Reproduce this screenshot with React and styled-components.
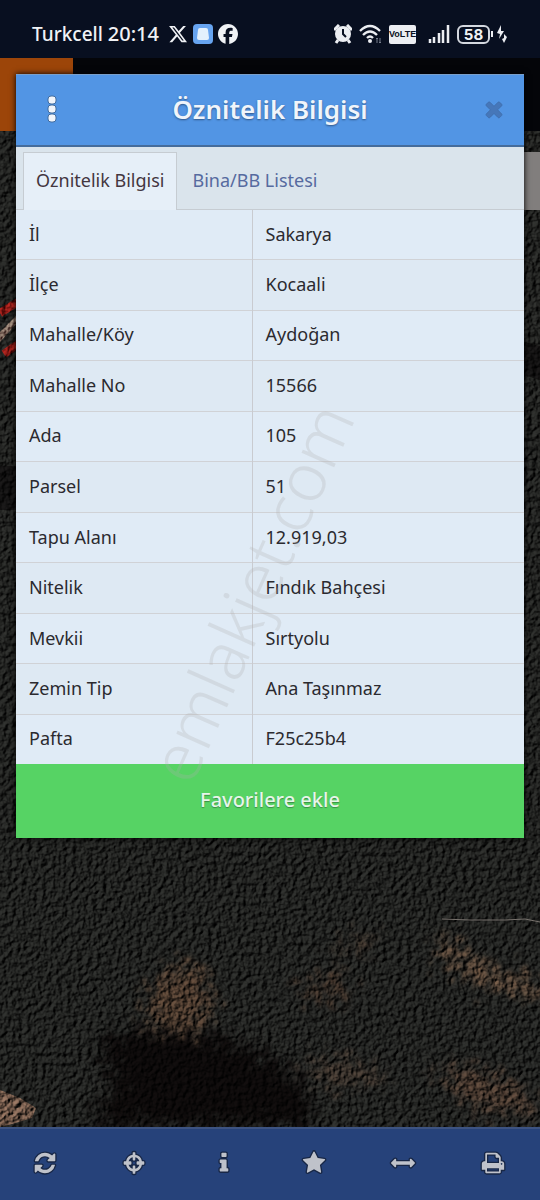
import React, {useState} from 'react'
import styled, {createGlobalStyle} from 'styled-components'
import {FaXTwitter, FaFacebook} from 'react-icons/fa6'

const datos = [
  {nombre: 'İl', valor: 'Sakarya'},
  {nombre: 'İlçe', valor: 'Kocaali'},
  {nombre: 'Mahalle/Köy', valor: 'Aydoğan'},
  {nombre: 'Mahalle No', valor: '15566'},
  {nombre: 'Ada', valor: '105'},
  {nombre: 'Parsel', valor: '51'},
  {nombre: 'Tapu Alanı', valor: '12.919,03'},
  {nombre: 'Nitelik', valor: 'Fındık Bahçesi'},
  {nombre: 'Mevkii', valor: 'Sırtyolu'},
  {nombre: 'Zemin Tip', valor: 'Ana Taşınmaz'},
  {nombre: 'Pafta', valor: 'F25c25b4'}
]

const herramientas = [
  {id: 'Yenile', d: 'M1639 1056q0 5-1 7-64 268-268 434.500t-478 166.500q-146 0-282.500-55t-243.500-157l-129 129q-19 19-45 19t-45-19-19-45v-448q0-26 19-45t45-19h448q26 0 45 19t19 45-19 45l-137 137q71 66 161 102t187 36q134 0 250-65t186-179q11-17 53-117 8-23 30-23h192q13 0 22.500 9.500t9.500 22.500zm25-800v448q0 26-19 45t-45 19h-448q-26 0-45-19t-19-45 19-45l138-138q-148-137-349-137-134 0-250 65t-186 179q-11 17-53 117-8 23-30 23h-199q-13 0-22.500-9.500t-9.500-22.500v-7q65-268 270-434.500t480-166.500q146 0 284 55.500t245 156.500l130-129q19-19 45-19t45 19 19 45z'},
  {id: 'Konum', d: 'M800 128q0-40 40-40h112q40 0 40 40v144q200 34 330 164t166 332h112q64 0 64 64v128q0 64-64 64h-112q-36 202-166 332t-330 166v142q0 40-40 40h-112q-40 0-40-40v-142q-200-36-330-166t-166-332H192q-64 0-64-64V832q0-64 64-64h112q36-202 166-332t330-164zm0 344q-120 30-200 110T492 768h148q64 0 64 64v128q0 64-64 64H492q28 106 108 186t200 112v-170q0-64 64-64h64q64 0 64 64v170q120-32 200-112t108-186h-148q-64 0-64-64V832q0-64 64-64h148q-28-106-108-186T992 472v168q0 64-64 64h-64q-64 0-64-64z'},
  {id: 'Bilgi', d: 'M1216 1344v128q0 26-19 45t-45 19h-512q-26 0-45-19t-19-45v-128q0-26 19-45t45-19h64v-384h-64q-26 0-45-19t-19-45v-128q0-26 19-45t45-19h384q26 0 45 19t19 45v576h64q26 0 45 19t19 45zm-128-1152v192q0 26-19 45t-45 19h-256q-26 0-45-19t-19-45v-192q0-26 19-45t45-19h256q26 0 45 19t19 45z'},
  {id: 'Favoriler', d: 'M1728 647q0 22-26 48l-363 354 86 500q1 7 1 20 0 21-10.500 35.500t-30.500 14.500q-19 0-40-12l-449-236-449 236q-22 12-40 12-21 0-31.500-14.500t-10.500-35.500q0-6 2-20l86-500-364-354q-25-27-25-48 0-37 56-46l502-73 225-455q19-41 49-41t49 41l225 455 502 73q56 9 56 46z'},
  {id: 'Ölçüm', d: 'M1792 896q0 26-19 45l-256 256q-19 19-45 19t-45-19-19-45v-128H384v128q0 26-19 45t-45 19-45-19L19 941Q0 922 0 896t19-45l256-256q19-19 45-19t45 19 19 45v128h1024V640q0-26 19-45t45-19 45 19l256 256q19 19 19 45z'},
  {id: 'Yazdır', d: 'M448 1536h896v-256h-896v256zm0-640h896v-384h-160q-40 0-68-28t-28-68v-160h-640v640zm1152 64q0-26-19-45t-45-19-45 19-19 45 19 45 45 19 45-19 19-45zm128 0v416q0 13-9.500 22.500t-22.500 9.500h-224v160q0 40-28 68t-68 28h-960q-40 0-68-28t-28-68v-160h-224q-13 0-22.500-9.500t-9.500-22.500v-416q0-79 56.500-135.500t135.500-56.500h64v-544q0-40 28-68t68-28h672q40 0 88 20t76 48l152 152q28 28 48 76t20 88v256h64q79 0 135.500 56.500t56.500 135.500z'}
]

const cerrar = 'M1490 1322q0 40-28 68l-136 136q-28 28-68 28t-68-28l-294-294-294 294q-28 28-68 28t-68-28l-136-136q-28-28-28-68t28-68l294-294-294-294q-28-28-28-68t28-68l136-136q28-28 68-28t68 28l294 294 294-294q28-28 68-28t68 28l136 136q28 28 28 68t-28 68l-294 294 294 294q28 28 28 68z'

const Satelite = () => (
  <Terreno viewBox="0 58 540 1069" preserveAspectRatio="xMidYMid slice" aria-hidden="true">
    <defs>
      <filter id="relieve" x="0" y="0" width="100%" height="100%" colorInterpolationFilters="sRGB">
        <feTurbulence type="fractalNoise" baseFrequency="0.2" numOctaves="4" seed="7" result="ruido" />
        <feDiffuseLighting in="ruido" surfaceScale="3" diffuseConstant="0.7" lightingColor="#ffffff">
          <feDistantLight azimuth="215" elevation="42" />
        </feDiffuseLighting>
      </filter>
      <filter id="mancha" x="-20%" y="-20%" width="140%" height="140%" colorInterpolationFilters="sRGB">
        <feTurbulence type="fractalNoise" baseFrequency="0.14" numOctaves="4" seed="3" result="r" />
        <feDisplacementMap in="SourceGraphic" in2="r" scale="70" xChannelSelector="R" yChannelSelector="G" />
        <feGaussianBlur stdDeviation="2" />
      </filter>
    </defs>
    <rect y="58" width="540" height="1069" fill="#242523" />
    <g filter="url(#mancha)">
      <path d="M92 1038 L150 1030 L230 1040 L262 1052 L306 1084 L312 1127 H84 L116 1088 Z" fill="#0b0808" opacity=".9" />
      <path d="M150 985 L185 962 L208 976 L208 1022 L185 1035 L148 1022 Z" fill="#76513a" opacity=".5" />
      <path d="M436 928 L462 952 L492 970 L540 984 V998 L484 986 L446 962 Z" fill="#8b654b" opacity=".6" />
      <path d="M350 940 L380 930 L350 952 L330 966 Z" fill="#694936" opacity=".5" />
      <path d="M304 984 L338 980 L350 996 L310 998 Z" fill="#65432f" opacity=".5" />
      <path d="M432 1066 L486 1072 L526 1092 L532 1118 L470 1104 Z" fill="#71503c" opacity=".5" />
      <path d="M300 1068 L345 1058 L390 1080 L330 1086 Z" fill="#5c4538" opacity=".5" />
    </g>
    <path d="M0 466 H20 V510 H0 Z M515 340 L540 346 V380 L520 374 Z" fill="#0a0909" opacity=".6" />
    <path d="M0 1090 L20 1098 L36 1108 L32 1118 L12 1124 L0 1127 Z" fill="#846552" opacity=".8" />
    <path d="M0 332 L18 314 V322 L0 342 Z" fill="#8b7669" />
    <path d="M0 313 L18 302 M4 354 L18 344" stroke="#991e19" strokeWidth="8" />
    <Relieve y="58" width="540" height="1069" filter="url(#relieve)" />
    <path d="M442 919 L470 920 L505 920 L525 919 L540 922" fill="none" stroke="#77716c" strokeWidth="1" />
  </Terreno>
)

const BarraEstado = () => (
  <Estado>
    <Grupo>
      <Operador>Turkcell</Operador>
      <Hora>20:14</Hora>
      <FaXTwitter size={20} />
      <svg width="20" height="20" viewBox="0 0 20 20" aria-hidden="true">
        <rect width="20" height="20" rx="4" fill="#67a4f0" />
        <path d="M5 6q0-2 2-2h6q2 0 2 2l1 8q0 2-2 2H6q-2 0-2-2z" fill="#e4f1fd" />
      </svg>
      <FaFacebook size={20} />
    </Grupo>
    <Iconos>
      <svg width="18" height="20" viewBox="1 0 18 20" aria-hidden="true">
        <path d="M1 6 L6 1 M19 6 L14 1 M5 16 L3 19 M15 16 L17 19" stroke="#eceef2" strokeWidth="3" />
        <circle cx="10" cy="10" r="8" fill="#eceef2" />
        <path d="M10 5v5l3 3" stroke="#0a1122" strokeWidth="2" fill="none" />
      </svg>
      <svg width="23" height="20" viewBox="0 0 23 20" aria-hidden="true">
        <g fill="none" stroke="#eceef2" strokeWidth="2.300">
          <path d="M1 7q10-10 20 0M4 11q7-7 14 0M8 14q3-3 6 0" />
        </g>
        <circle cx="11" cy="17" r="2" fill="#eceef2" />
        <path d="M18 14v5m-1-4 1-1 1 1M21 14v5m-1-1 1 1 1-1" stroke="#777e8c" fill="none" />
      </svg>
      <Volte>VoLTE</Volte>
      <svg width="22" height="20" viewBox="0 0 22 20" aria-hidden="true">
        <path d="M2 15v4M6 13v6M11 9v10M15 6v13M20 1v18" stroke="#eceef2" strokeWidth="2.500" />
      </svg>
      <Bateria>
        <Carga>58</Carga>
        <svg width="18" height="20" viewBox="0 0 18 20" aria-hidden="true">
          <path d="M2 7v6" stroke="#eceef2" strokeWidth="2" />
          <path d="M11 1 L7 9 L10 10 L9 15 L14 7 L11 7z M14 10v4l-2 1 2 4 3-6z" fill="#eceef2" />
        </svg>
      </Bateria>
    </Iconos>
  </Estado>
)

const App = () => {

  const [pestana, setPestana] = useState('bilgi')

  return (
    <Pagina>
      <EstiloGlobal />
      <BarraEstado />
      <Mapa>
        <Satelite />
        <BarraMapa><BotonMenu type="button" aria-label="Menü" /></BarraMapa>
        <PanelLateral />
        <Ventana>
          <Cabecera>
            <BotonCabecera type="button" aria-label="Seçenekler">
              <svg width="24" height="28" viewBox="0 0 24 28" aria-hidden="true">
                <g fill="#f1f5fb" stroke="#416c9f" strokeWidth="1">
                  <rect x="8" y="1" width="8" height="8" rx="3" />
                  <rect x="8" y="10" width="8" height="8" rx="3" />
                  <rect x="8" y="19" width="8" height="8" rx="3" />
                </g>
              </svg>
            </BotonCabecera>
            <Titulo>Öznitelik Bilgisi</Titulo>
            <BotonCabecera type="button" aria-label="Kapat" $final>
              <svg width="24" height="24" viewBox="0 0 1792 1792" aria-hidden="true">
                <path d={cerrar} fill="#4677b9" stroke="#3e69a5" strokeWidth="50" />
              </svg>
            </BotonCabecera>
          </Cabecera>
          <Pestanas role="tablist">
            <Pestana type="button" role="tab" aria-selected={pestana === 'bilgi'}
              $activa={pestana === 'bilgi'} onClick={()=> setPestana('bilgi')}>Öznitelik Bilgisi</Pestana>
            <Pestana type="button" role="tab" aria-selected={pestana === 'bina'}
              $activa={pestana === 'bina'} onClick={()=> setPestana('bina')}>Bina/BB Listesi</Pestana>
          </Pestanas>
          <Tabla>
            <tbody>
              {datos.map((dato)=>(
                <Fila key={dato.nombre}>
                  <Nombre scope="row">{dato.nombre}</Nombre>
                  <Valor>{dato.valor}</Valor>
                </Fila>
              ))}
            </tbody>
          </Tabla>
          <BotonFavorito type="button">Favorilere ekle</BotonFavorito>
          <Marca>emlakjet.com</Marca>
        </Ventana>
      </Mapa>
      <Herramientas>
        {herramientas.map((h)=>(
          <Herramienta key={h.id} type="button" aria-label={h.id}>
            <svg width="24" height="24" viewBox="0 0 1792 1792" aria-hidden="true"><path d={h.d} /></svg>
          </Herramienta>
        ))}
      </Herramientas>
    </Pagina>
  )
}

const EstiloGlobal = createGlobalStyle`
    * {
        box-sizing: border-box;
    }

    body {
        margin: 0;
        background: #1c1c1b;
        font-family: "Noto Sans", sans-serif;
    }

    button {
        font-family: inherit;
        border: none;
        padding: 0;
        cursor: pointer;
    }
`;

const Pagina = styled.div`
    min-height: 100vh;
    display: flex;
    flex-direction: column;
`;

const Estado = styled.header`
    height: 58px;
    padding: 10px 32px 0;
    display: flex;
    align-items: center;
    justify-content: space-between;
    background: #080f20;
    color: #f0f2f5;
`;

const Grupo = styled.div`
    display: flex;
    align-items: center;
    gap: 5px;
`;

const Iconos = styled(Grupo)`
    gap: 7px;
`;

const Operador = styled.span`
    font-size: 19px;
    font-weight: 500;
    line-height: 24px;
`;

const Hora = styled.time`
    margin-right: 4px;
    font-size: 20px;
    font-weight: 500;
    line-height: 24px;
`;

const Volte = styled.span`
    width: 27px;
    height: 19px;
    margin-right: 5px;
    border-radius: 2px;
    background: #eceef2;
    color: #0a1122;
    font-family: "Liberation Sans", sans-serif;
    font-size: 9px;
    font-weight: bold;
    line-height: 19px;
    text-align: center;
    overflow: hidden;
`;

const Bateria = styled.div`
    display: flex;
    align-items: center;
`;

const Carga = styled.span`
    width: 33px;
    height: 19px;
    border: 2px solid #d4d8df;
    border-radius: 6px;
    font-family: Inter, sans-serif;
    font-size: 15px;
    font-weight: bold;
    line-height: 15px;
    text-align: center;
`;

const Mapa = styled.main`
    position: relative;
    flex: 1;
    padding: 16px;
    overflow: hidden;
`;

const Terreno = styled.svg`
    position: absolute;
    inset: 0;
    width: 100%;
    height: 100%;
    isolation: isolate;
`;

const Relieve = styled.rect`
    mix-blend-mode: overlay;
`;

const BarraMapa = styled.div`
    position: absolute;
    top: 0;
    left: 0;
    right: 0;
    height: 73px;
    background: #040509;
`;

const BotonMenu = styled.button`
    display: block;
    width: 73px;
    height: 73px;
    background: #9c4509;
`;

const PanelLateral = styled.div`
    position: absolute;
    top: 94px;
    right: 0;
    width: 40px;
    height: 58px;
    background: #817e7d;
`;

const Ventana = styled.section`
    position: relative;
    background: #e0ebf5;
    box-shadow: 0 0 6px #000;
`;

const Cabecera = styled.header`
    height: 73px;
    padding-bottom: 2px;
    display: grid;
    grid-template-columns: 72px 1fr 72px;
    align-items: center;
    background: #5295e4;
    border-top: 1px solid #7a9fc9;
    border-bottom: 2px solid #456c9b;
`;

const BotonCabecera = styled.button`
    width: ${(props)=> props.$final ? '60px' : '72px'};
    height: 44px;
    display: grid;
    place-items: center;
    justify-self: end;
    background: none;
`;

const Titulo = styled.h1`
    margin: 0;
    color: #f0f5fb;
    font-size: 26px;
    font-weight: 600;
    line-height: 36px;
    text-align: center;
    text-shadow: 0 1px 2px #2f5688;
`;

const Pestanas = styled.div`
    height: 63px;
    padding: 5px 7px 0;
    display: flex;
    gap: 2px;
    background: #dae4ec;
    border-bottom: 1px solid #c6ccd2;
`;

const Pestana = styled.button`
    padding: 0 12px 4px;
    margin-bottom: -1px;
    border: 1px solid ${(props)=> props.$activa ? '#c6ccd2' : 'transparent'};
    border-bottom: none;
    background: ${(props)=> props.$activa ? '#e6eff8' : 'transparent'};
    color: ${(props)=> props.$activa ? '#43363f' : '#566a9f'};
    font-size: 18px;
`;

const Tabla = styled.table`
    width: 100%;
    height: 554px;
    border-collapse: collapse;
    table-layout: fixed;
    color: #2b2a2f;
    font-size: 18px;
    line-height: 24px;
`;

const Fila = styled.tr`
    background: #e0ebf6;
    border-bottom: 1px solid #d0d2d6;

    &:nth-child(even) {
        background: #dee9f3;
    }

    &:last-child {
        border-bottom: none;
    }
`;

const Nombre = styled.th`
    width: 236px;
    padding: 0 13px 2px;
    border-right: 1px solid #c9cbd0;
    font-weight: normal;
    text-align: left;
`;

const Valor = styled.td`
    padding: 0 13px 2px;
`;

const BotonFavorito = styled.button`
    display: block;
    width: 100%;
    height: 74px;
    padding-bottom: 4px;
    background: #56d364;
    color: #e7f5ea;
    font-size: 20px;
    font-weight: 500;
    text-shadow: 0 1px 1px #3b8c46;
`;

const Marca = styled.span`
    position: absolute;
    top: 518px;
    left: 46%;
    color: rgba(175, 172, 172, .26);
    font-size: 67px;
    font-weight: 300;
    line-height: 64px;
    white-space: nowrap;
    transform: translate(-50%, -50%) rotate(-66deg);
    pointer-events: none;
`;

const Herramientas = styled.nav`
    height: 73px;
    padding: 0 2px 4px 0;
    display: grid;
    grid-template-columns: repeat(6, 1fr);
    background: #26427a;
    border-top: 2px solid #3d5381;
`;

const Herramienta = styled.button`
    display: grid;
    place-items: center;
    background: none;

    svg {
        fill: #bfc2ca;
        stroke: #182746;
        stroke-width: 200px;
        paint-order: stroke;
        overflow: visible;
    }
`;

export default App
